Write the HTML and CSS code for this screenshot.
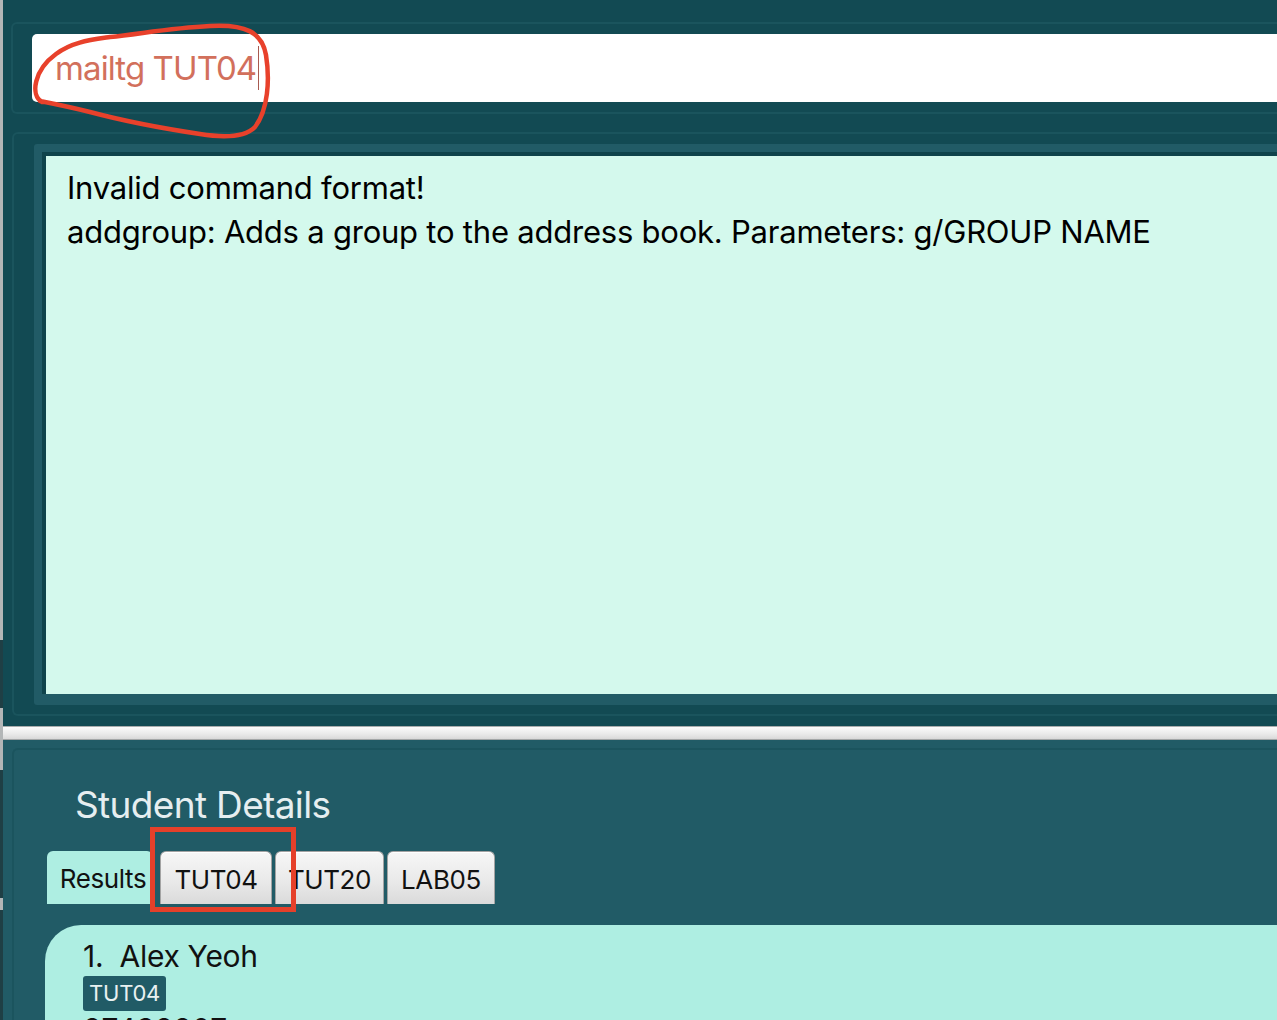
FILE: index.html
```html
<!DOCTYPE html>
<html>
<head>
<meta charset="utf-8">
<link rel="stylesheet" href="styles.css">
</head>
<body>
<div class="window">
  <div class="edge">
    <div class="seg seg-grey s1"></div>
    <div class="seg seg-dark s2"></div>
    <div class="seg seg-grey s3"></div>
    <div class="seg seg-dark s4"></div>
    <div class="seg seg-grey s5"></div>
    <div class="seg seg-dark s6"></div>
  </div>
  <div class="main">
    <section class="cmd-area">
      <div class="cmd-box">
        <div class="cmd-input"><span class="cmd-text">mailtg TUT04</span><span class="caret"></span></div>
      </div>
    </section>
    <section class="result-area">
      <div class="result-outer">
        <div class="result-inner">
          <div class="result-text">
            <div class="line">Invalid command format!</div>
            <div class="line">addgroup: Adds a group to the address book. Parameters: g/GROUP NAME</div>
          </div>
        </div>
      </div>
    </section>
    <div class="splitter"></div>
    <section class="lower">
      <div class="lower-box">
        <h2 class="title">Student Details</h2>
        <div class="tabs">
          <div class="tab tab-active">Results</div>
          <div class="tab tab-t1">TUT04</div>
          <div class="tab tab-t2">TUT20</div>
          <div class="tab tab-t3">LAB05</div>
        </div>
        <div class="card">
          <div class="name">1.&nbsp; Alex Yeoh</div>
          <div class="tags"><span class="tag">TUT04</span></div>
          <div class="phone">87438807</div>
        </div>
      </div>
    </section>
  </div>
</div>
<svg class="annot" width="1277" height="1020" viewBox="0 0 1277 1020">
  <path d="M 42 102 C 30 95, 34 70, 56 54 C 72 42, 90 40, 110 37 C 140 34, 170 28, 210 26 C 245 24, 262 32, 266 55 C 270 80, 268 110, 255 127 C 245 137, 225 138, 200 134 C 160 128, 120 120, 90 112 C 70 107, 55 104, 40 101" fill="none" stroke="#e8412b" stroke-width="4.5" stroke-linecap="round"/>
  <rect x="152.5" y="829.5" width="141" height="80" fill="none" stroke="#e5402a" stroke-width="5"/>
</svg>
</body>
</html>
```

FILE: styles.css
```css
html, body {
  margin: 0;
  padding: 0;
  width: 1277px;
  height: 1020px;
  overflow: hidden;
  background: #124a53;
  font-family: Inter, "Liberation Sans", sans-serif;
}

.window {
  display: flex;
  width: 1277px;
  height: 1020px;
}

.edge {
  width: 3px;
  display: flex;
  flex-direction: column;
  flex: none;
}
.seg { flex: none; }
.seg-grey { background: #b3b6b7; }
.seg-dark { background: #1f3f45; }
.s1 { height: 640px; }
.s2 { height: 68px; }
.s3 { height: 62px; }
.s4 { height: 128px; }
.s5 { height: 12px; }
.s6 { flex: 1; }

.main {
  flex: 1;
  display: flex;
  flex-direction: column;
  min-width: 0;
  height: 1020px;
}

/* command box */
.cmd-area {
  flex: none;
  padding: 22px 0 0 8px;
}
.cmd-box {
  border: 2px solid #1a545d;
  border-right: none;
  border-radius: 6px 0 0 6px;
  padding: 10px 0 10px 19px;
}
.cmd-input {
  height: 68px;
  background: #ffffff;
  border-radius: 5px 0 0 5px;
  display: flex;
  align-items: center;
  padding-left: 23px;
}
.cmd-text {
  font-size: 33px;
  color: #d2705c;
  letter-spacing: -0.9px;
}
.caret {
  width: 1px;
  height: 44px;
  background: #a85a50;
  margin-left: 2px;
}

/* result display */
.result-area {
  flex: none;
  padding: 18px 0 0 9px;
}
.result-outer {
  border: 2px solid #1a545d;
  border-right: none;
  border-radius: 6px 0 0 6px;
  padding: 10px 0 9px 20px;
}
.result-inner {
  background: #215b66;
  padding: 8px 0 11px 8px;
  border-radius: 3px 0 0 3px;
}
.result-text {
  background: #d4f9ed;
  border-top: 4px solid #0f434b;
  border-left: 4px solid #0f434b;
  padding: 10px 0 0 21px;
  box-sizing: border-box;
  height: 542px;
}
.line {
  font-size: 31px;
  line-height: 44px;
  color: #000;
  letter-spacing: -0.22px;
  white-space: nowrap;
}

/* splitter */
.splitter {
  flex: none;
  margin-top: 10px;
  height: 12px;
  border-top: 1px solid #a9acad;
  border-bottom: 1px solid #a3a6a7;
  background: linear-gradient(#fbfbfb, #e9e9e9 60%, #d9d9d9);
}

/* lower */
.lower {
  flex: 1;
  min-height: 0;
  overflow: hidden;
  background: #215b66;
  padding: 8px 0 0 9px;
}
.lower-box {
  height: 100%;
  border-top: 2px solid #1b545e;
  border-left: 2px solid #1b545e;
  border-radius: 6px 0 0 0;
  padding-left: 31px;
}
.title {
  margin: 0;
  padding: 33px 0 0 30px;
  font-size: 37px;
  font-weight: 400;
  line-height: 44px;
  color: #e6eef0;
  letter-spacing: -0.65px;
}

.tabs {
  display: flex;
  margin-top: 24px;
  height: 53px;
  align-items: flex-end;
}
.tab {
  height: 53px;
  box-sizing: border-box;
  display: flex;
  align-items: center;
  justify-content: center;
  font-size: 26px;
  color: #111;
  letter-spacing: -0.4px;
  border-radius: 6px 6px 0 0;
}
.tab-active {
  background: #aeeee2;
  width: 106px;
  margin-left: 2px;
  padding-top: 2px;
  padding-left: 6px;
}
.tab-t1, .tab-t2, .tab-t3 {
  border: 1px solid #a3a3a3;
  border-bottom: none;
  background: linear-gradient(#f7f7f7, #e8e8e8 60%, #dadada);
  padding-top: 2px;
  box-shadow: inset 0 1px 0 #ffffff;
}
.tab-t1 { width: 112px; margin-left: 7px; }
.tab-t2 { width: 109px; margin-left: 3px; }
.tab-t3 { width: 108px; margin-left: 3px; }

.card {
  margin-top: 21px;
  background: #aeeee2;
  border-radius: 36px 0 0 0;
  padding: 12px 0 0 38px;
  height: 200px;
}
.name {
  font-size: 30px;
  line-height: 38px;
  color: #111;
  letter-spacing: -0.3px;
}
.tags {
  display: flex;
  margin-top: 1px;
}
.tag {
  background: #215b66;
  color: #e9f1f1;
  font-size: 22px;
  line-height: 35px;
  height: 35px;
  padding: 0 6px;
  border-radius: 3px;
  letter-spacing: -0.2px;
}
.phone {
  font-size: 30px;
  line-height: 36px;
  color: #111;
}

.annot {
  position: absolute;
  left: 0;
  top: 0;
  pointer-events: none;
}
```
